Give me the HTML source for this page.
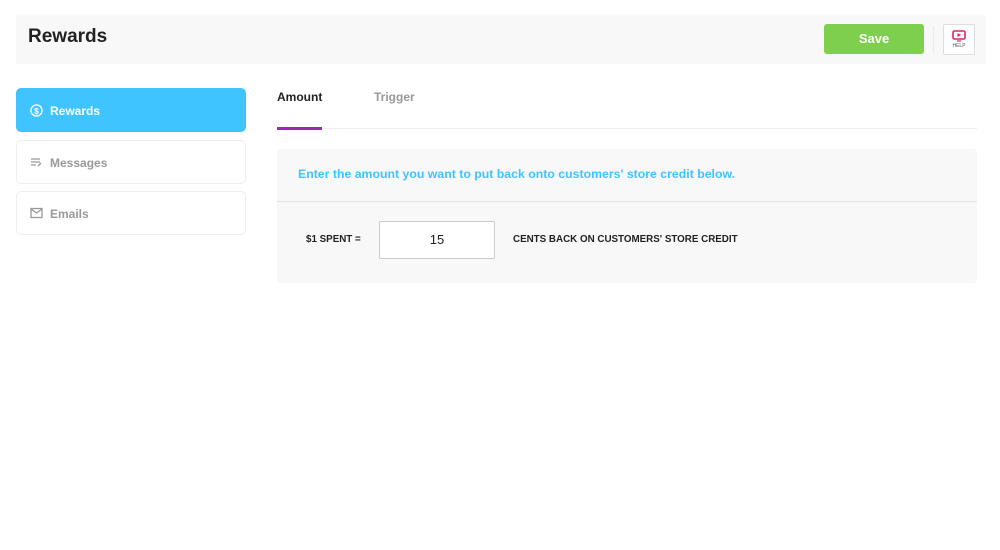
<!DOCTYPE html>
<html><head><style>
body{margin:0;width:1000px;height:550px;background:#fff;font-family:"Liberation Sans",sans-serif;position:relative;overflow:hidden}
.hdr{position:absolute;left:16px;top:15px;width:970px;height:49px;background:#f8f8f8}
.hdr h1{position:absolute;left:12px;top:11px;margin:0;font-size:19px;font-weight:bold;color:#222}
.save{position:absolute;left:808px;top:9px;width:100px;height:30px;background:#7dcf4d;border-radius:3px;color:#fff;font-weight:bold;font-size:13px;text-align:center;line-height:30px}
.sep{position:absolute;left:917px;top:12px;height:26px;border-left:1px dotted #ddd}
.help{position:absolute;left:927px;top:9px;width:30px;height:29px;border:1px solid #ddd;border-radius:2px;background:#fff;font-size:5px;text-align:center}
.nav{position:absolute;left:16px;width:230px;height:44px;border:1px solid #eee;border-radius:5px;box-sizing:border-box;font-size:12px;font-weight:bold;color:#999;line-height:44px;padding-left:33px}
.nav.act{background:#40c4ff;border-color:#40c4ff;color:#fff}
.ic{position:absolute;left:13px;top:15px}
.tab{position:absolute;top:90px;font-size:12px;font-weight:bold}
.panel{position:absolute;left:277px;top:149px;width:700px;height:134px;background:#f8f8f8;border-radius:4px}
</style></head><body>
<div class="hdr"><h1>Rewards</h1><div class="save">Save</div><div class="sep"></div>
<div class="help"><svg width="14" height="12" viewBox="0 0 14 12" style="margin-top:5px"><rect x="1" y="1" width="12" height="8" rx="1.5" fill="none" stroke="#e91e63" stroke-width="1.6"/><path d="M5.5 3l3.5 2-3.5 2z" fill="#e91e63"/><path d="M5 11h4" stroke="#e91e63" stroke-width="1.2"/></svg><div style="color:#555;margin-top:-1px">HELP</div></div></div>
<div class="nav act" style="top:88px"><svg class="ic" width="13" height="13" viewBox="0 0 14 14"><circle cx="7" cy="7" r="6" fill="none" stroke="#fff" stroke-width="1.4"/><text x="7" y="10.5" font-size="9" fill="#fff" text-anchor="middle" font-family="Liberation Sans">$</text></svg>Rewards</div>
<div class="nav" style="top:140px"><svg class="ic" width="13" height="12" viewBox="0 0 13 12"><path d="M1 3h9M1 6h9M1 9h5M8 10l3-3" stroke="#999" stroke-width="1.3" fill="none"/></svg>Messages</div>
<div class="nav" style="top:191px"><svg class="ic" width="13" height="12" viewBox="0 0 13 12"><rect x="1" y="1.5" width="11" height="9" fill="none" stroke="#999" stroke-width="1.3"/><path d="M1 2l5.5 4 5.5-4" stroke="#999" stroke-width="1.3" fill="none"/></svg>Emails</div>
<div class="tab" style="left:277px;color:#222">Amount</div>
<div class="tab" style="left:374px;color:#999">Trigger</div>
<div style="position:absolute;left:277px;top:128px;width:700px;border-top:1px solid #eee"></div>
<div style="position:absolute;left:277px;top:127px;width:45px;height:3px;background:#9c27b0"></div>
<div class="panel">
<div style="position:absolute;left:21px;top:18px;color:#40c4ff;font-weight:bold;font-size:12.3px">Enter the amount you want to put back onto customers' store credit below.</div>
<div style="position:absolute;left:0;top:52px;width:700px;border-top:1px solid #e3e3e3"></div>
<div style="position:absolute;left:29px;top:85px;font-size:9.8px;font-weight:bold;color:#222">$1 SPENT =</div>
<div style="position:absolute;left:102px;top:72px;width:114px;height:36px;background:#fff;border:1px solid #ccc;border-radius:2px;text-align:center;line-height:36px;font-size:13px;color:#222">15</div>
<div style="position:absolute;left:236px;top:85px;font-size:9.8px;font-weight:bold;color:#222">CENTS BACK ON CUSTOMERS' STORE CREDIT</div>
</div>
</body></html>
